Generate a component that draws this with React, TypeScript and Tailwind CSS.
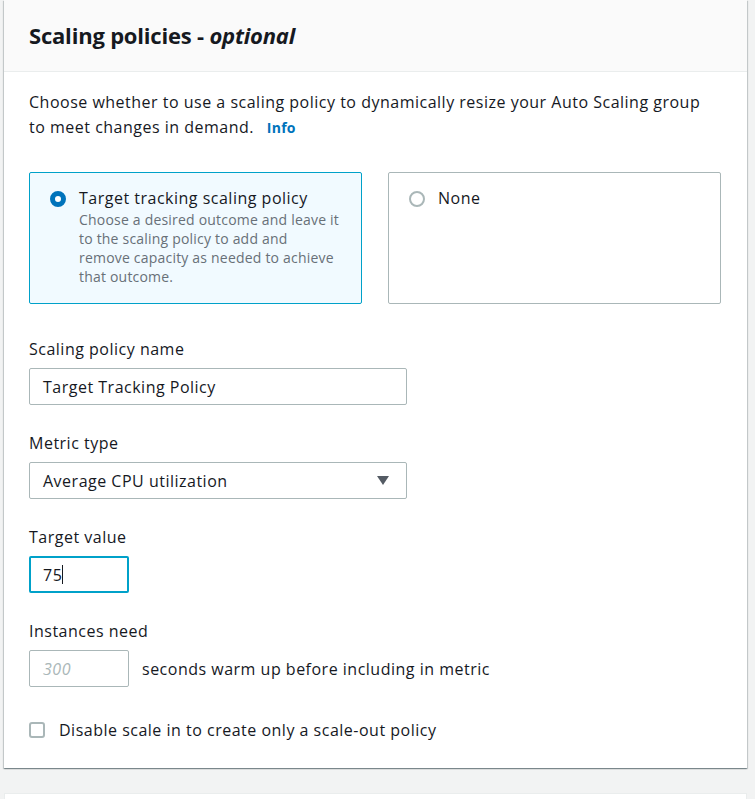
import { useState } from 'react'

const font = 'font-["Open_Sans","Noto_Sans",Arial,sans-serif]'

function Radio({ checked }: { checked: boolean }) {
  return checked ? (
    <span className="mt-[4px] w-4 h-4 shrink-0 rounded-full border-[5px] border-[#0073bb] bg-white" />
  ) : (
    <span className="mt-[4px] w-4 h-4 shrink-0 rounded-full border-2 border-[#aab7b8] bg-white" />
  )
}

function Field({ label, children }: { label: string; children: React.ReactNode }) {
  return (
    <div>
      <div className="text-[16px] leading-[22px] text-[#16191f]">{label}</div>
      <div className="mt-[8px]">{children}</div>
    </div>
  )
}

export default function App() {
  const [policy, setPolicy] = useState('target')
  const [disableScaleIn, setDisableScaleIn] = useState(false)

  return (
    <div className={`min-h-screen bg-[#f2f3f3] ${font} text-[#16191f] tracking-[0.5px]`}>
      {/* Card */}
      <div className="ml-[4px] w-[743px] bg-white shadow-[0_1px_1px_0_rgba(0,28,36,0.3),1px_1px_1px_0_rgba(0,28,36,0.15),-1px_1px_1px_0_rgba(0,28,36,0.15)]">
        <div className="h-[72px] bg-[#fafafa] border-b border-[#eaeded] px-[25px] flex items-center">
          <h2 className="text-[22px] font-bold tracking-[-0.2px]">
            Scaling policies - <i>optional</i>
          </h2>
        </div>

        <div className="px-[25px] pt-[18px] pb-[27px]">
          <p className="text-[16px] leading-[25px]">
            Choose whether to use a scaling policy to dynamically resize your Auto Scaling group
            <br />
            to meet changes in demand.{' '}
            <a className="ml-[8px] text-[14px] font-bold text-[#0073bb] tracking-[0.3px]">Info</a>
          </p>

          {/* Tiles */}
          <div className="mt-[32px] grid grid-cols-2 gap-[26px] w-[692px]">
            <button
              onClick={() => setPolicy('target')}
              className={`h-[132px] rounded-[2px] border text-left flex items-start gap-[13px] pl-[20px] pr-[21px] pt-[14px] ${
                policy === 'target' ? 'bg-[#f1faff] border-[#00a1c9]' : 'bg-white border-[#aab7b8]'
              }`}
            >
              <Radio checked={policy === 'target'} />
              <div>
                <div className="text-[16px] leading-[22px]">Target tracking scaling policy</div>
                <div className="mt-[1px] text-[14px] leading-[19px] text-[#687078] tracking-[0.2px]">
                  Choose a desired outcome and leave it to the scaling policy to add and remove capacity as needed to achieve that outcome.
                </div>
              </div>
            </button>
            <button
              onClick={() => setPolicy('none')}
              className={`h-[132px] rounded-[2px] border text-left flex items-start gap-[13px] pl-[20px] pr-[21px] pt-[14px] ${
                policy === 'none' ? 'bg-[#f1faff] border-[#00a1c9]' : 'bg-white border-[#aab7b8]'
              }`}
            >
              <Radio checked={policy === 'none'} />
              <div className="text-[16px] leading-[22px]">None</div>
            </button>
          </div>

          <div className="mt-[34px] flex flex-col gap-[27px]">
            <Field label="Scaling policy name">
              <div className="w-[378px] h-[37px] border border-[#aab7b8] rounded-[2px] px-[13px] flex items-center text-[16px]">
                Target Tracking Policy
              </div>
            </Field>

            <Field label="Metric type">
              <div className="w-[378px] h-[37px] border border-[#aab7b8] rounded-[2px] pl-[13px] pr-[17px] flex items-center justify-between text-[16px]">
                <span>Average CPU utilization</span>
                <svg width="12" height="9" viewBox="0 0 12 9">
                  <path d="M0 0h12L6 9z" fill="#545b64" />
                </svg>
              </div>
            </Field>

            <Field label="Target value">
              <div className="w-[100px] h-[37px] border-2 border-[#00a1c9] rounded-[2px] px-[12px] flex items-center text-[16px]">
                75<span className="w-px h-[19px] bg-[#16191f]" />
              </div>
            </Field>

            <Field label="Instances need">
              <div className="flex items-center gap-[13px]">
                <div className="w-[100px] h-[37px] border border-[#aab7b8] rounded-[2px] px-[13px] flex items-center text-[16px] italic text-[#aab7b8]">
                  300
                </div>
                <span className="text-[16px]">seconds warm up before including in metric</span>
              </div>
            </Field>
          </div>

          <label
            className="mt-[32px] flex items-center gap-[14px] cursor-pointer"
            onClick={() => setDisableScaleIn(!disableScaleIn)}
          >
            <span
              className={`w-4 h-4 rounded-[3px] border-2 ${
                disableScaleIn ? 'bg-[#0073bb] border-[#0073bb]' : 'bg-white border-[#aab7b8]'
              }`}
            />
            <span className="text-[16px] leading-[22px]">Disable scale in to create only a scale-out policy</span>
          </label>
        </div>
      </div>

      {/* Next card, cut off */}
      <div className="mt-[25px] ml-[4px] w-[743px] h-[40px] bg-white border-t border-x border-[#eaeded]" />
    </div>
  )
}
